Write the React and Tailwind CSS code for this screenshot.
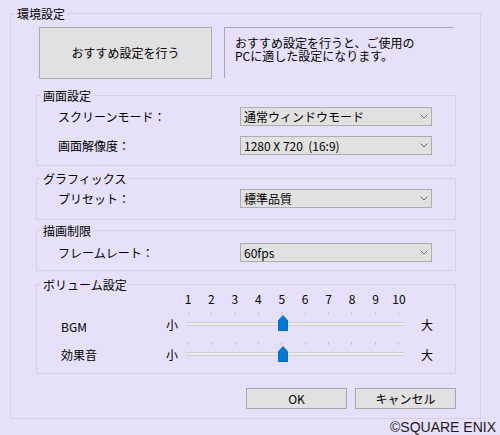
import React from "react";

const Chevron = () => (
  <svg width="8" height="5" viewBox="0 0 8 5" className="shrink-0">
    <polyline points="0.5,0.5 4,4 7.5,0.5" fill="none" stroke="#6a6a6a" strokeWidth="1" />
  </svg>
);

const Select = ({ value }) => (
  <div className="w-[192px] h-[19px] bg-[#e1e1e1] border border-[#adadad] flex items-center justify-between pl-[3px] pr-[3px]">
    <span className="text-[12px] leading-[14px] text-black whitespace-pre">{value}</span>
    <Chevron />
  </div>
);

const Row = ({ label, value }) => (
  <div className="flex items-center h-[19px]">
    <div className="w-[182px] text-[12px] leading-[14px] text-black">{label}</div>
    <Select value={value} />
  </div>
);

const Group = ({ title, className, children }) => (
  <fieldset className={className}>
    <legend className="ml-[4px] px-[2px] text-[12px] leading-[15px] text-black">{title}</legend>
    {children}
  </fieldset>
);

const nums = [1, 2, 3, 4, 5, 6, 7, 8, 9, 10];

const Thumb = ({ top }) => (
  <svg width="10" height="16" viewBox="0 0 10 16" className={top}>
    <path d="M0.5 5.5 L5 0.5 L9.5 5.5 L9.5 15.5 L0.5 15.5 Z" fill="#0078d7" stroke="#0a68c0" strokeWidth="1" />
  </svg>
);

const SliderRow = ({ label, labelTop, thumbTop }) => (
  <div className="flex h-[30px] pl-[24px]">
    <div className={`w-[105px] text-[12px] leading-[14px] text-black ${labelTop}`}>{label}</div>
    <div className="w-[20px] mt-[10px] text-[12px] leading-[14px] text-black">小</div>
    <div className="relative w-[218px] h-[30px]">
      <div className="flex justify-between pl-[2px] pr-[5px] mt-[4px]">
        {nums.map((n) => (
          <div key={n} className="w-px h-[3px] bg-[#c4c2cc]" />
        ))}
      </div>
      <div className="mt-[7px] h-[4px] bg-[#ededed] border-y border-[#d0d0d0]" />
      <div className="absolute left-[92px] top-0">
        <Thumb top={thumbTop} />
      </div>
    </div>
    <div className="ml-[17px] mt-[10px] text-[12px] leading-[14px] text-black">大</div>
  </div>
);

export default function App() {
  return (
    <div className="w-[500px] h-[435px] bg-[#e6e0fa] flex flex-col pt-[6px] overflow-hidden font-['Noto_Sans_CJK_JP',sans-serif] text-black">
      <fieldset className="ml-[10px] w-[471px] h-[413px] border border-[#d6d0e6] flex flex-col">
        <legend className="ml-[4px] px-[2px] text-[12px] leading-[15px]">環境設定</legend>

        <div className="flex mt-[6px] ml-[28px] h-[52px]">
          <div className="w-[173px] h-[52px] bg-[#e1e1e1] border border-[#adadad] flex items-center justify-center text-[12px] leading-[14px]">
            おすすめ設定を行う
          </div>
          <div className="ml-[12px] w-[230px] h-[52px] border border-[#a9a9a9] border-r-[#ebe8f5] border-b-[#ebe8f5] pl-[10px] pt-[8px] text-[12px] leading-[13px]">
            <div>おすすめ設定を行うと、ご使用の</div>
            <div>PCに適した設定になります。</div>
          </div>
        </div>

        <Group title="画面設定" className="ml-[25px] w-[420px] mt-[9px] border border-[#d6d0e6]">
          <div className="pl-[21px] pt-[4px] pb-[10px] flex flex-col gap-[10px]">
            <Row label="スクリーンモード：" value="通常ウィンドウモード" />
            <Row label="画面解像度：" value="1280 X 720  (16:9)" />
          </div>
        </Group>

        <Group title="グラフィックス" className="ml-[25px] w-[420px] mt-[5px] border border-[#d6d0e6]">
          <div className="pl-[21px] pt-[3px] pb-[11px]">
            <Row label="プリセット：" value="標準品質" />
          </div>
        </Group>

        <Group title="描画制限" className="ml-[25px] w-[420px] mt-[3px] border border-[#d6d0e6]">
          <div className="pl-[21px] pt-[5px] pb-[8px]">
            <Row label="フレームレート：" value="60fps" />
          </div>
        </Group>

        <Group title="ボリューム設定" className="ml-[25px] w-[420px] mt-[6px] border border-[#d6d0e6]">
          <div className="pb-[5px]">
            <div className="flex pl-[24px] h-[13px]">
              <div className="w-[125px]" />
              <div className="w-[218px] flex justify-between pl-[2px] pr-[5px]">
                {nums.map((n) => (
                  <div key={n} className="w-0 flex justify-center">
                    <span className="text-[12px] leading-[13px] whitespace-nowrap">{n}</span>
                  </div>
                ))}
              </div>
            </div>
            <div className="mt-[3px]">
              <SliderRow label="BGM" labelTop="mt-[12px]" thumbTop="mt-[7px]" />
              <SliderRow label="効果音" labelTop="mt-[10px]" thumbTop="mt-[8px]" />
            </div>
          </div>
        </Group>

        <div className="flex mt-[14px] ml-[235px] gap-[8px]">
          <div className="w-[101px] h-[21px] bg-[#e1e1e1] border border-[#a8a8a8] flex items-center justify-center text-[12px] leading-[14px]">
            OK
          </div>
          <div className="w-[101px] h-[21px] bg-[#e1e1e1] border border-[#a8a8a8] flex items-center justify-center text-[12px] leading-[14px]">
            キャンセル
          </div>
        </div>
      </fieldset>

      <div className="flex justify-end pr-[4px] font-['Liberation_Sans',Arial,sans-serif] text-[14px] leading-[16px] text-[#1c1c1c]">
        ©SQUARE ENIX
      </div>
    </div>
  );
}
